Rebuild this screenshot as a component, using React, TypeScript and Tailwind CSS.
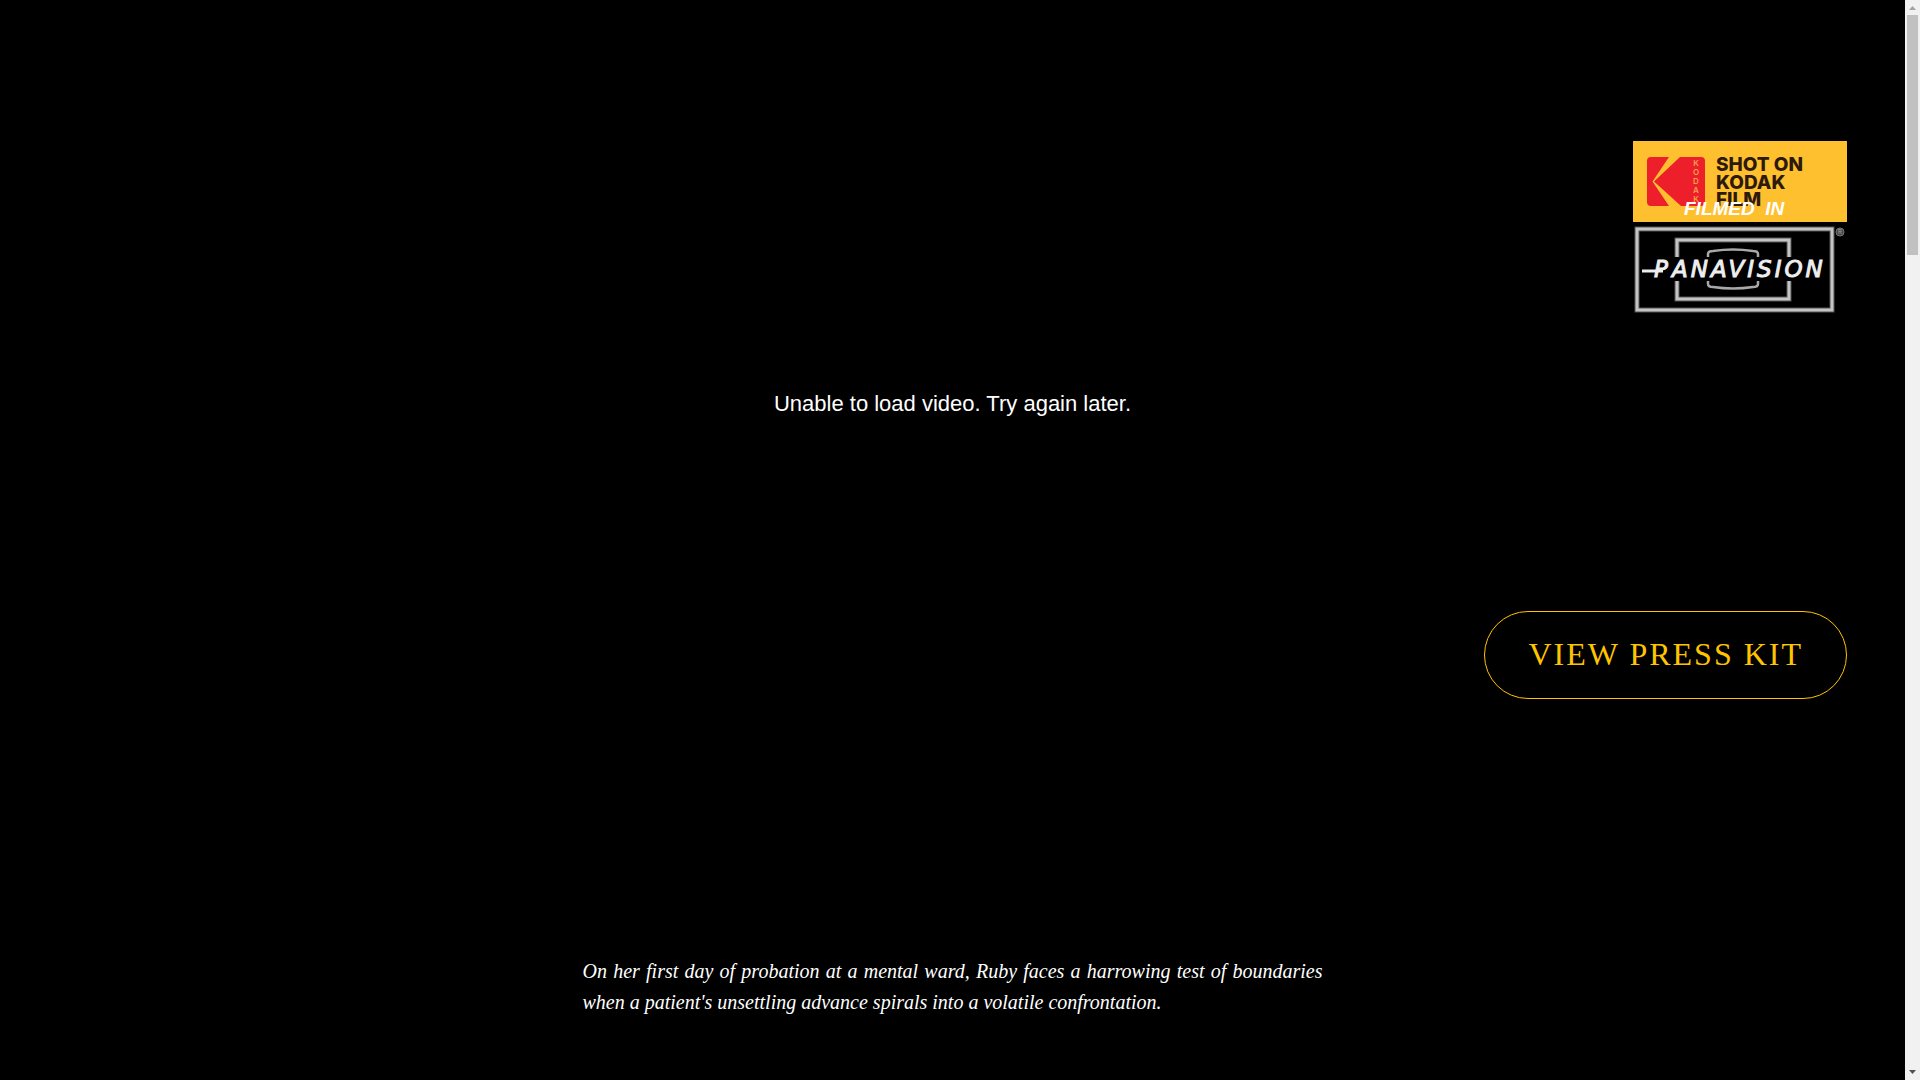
function KodakLogo() {
  return (
    <svg viewBox="0 0 214 81" className="w-[214px] h-[81px]" role="img" aria-label="Shot on Kodak Film">
      <rect width="214" height="81" fill="#ffc02f" />
      <path d="M18 16H36L19.500 40.500L36 65H18Q14 65 14 61V20Q14 16 18 16Z" fill="#ed1f2b" />
      <path d="M47 16H68Q72 16 72 20V61Q72 65 68 65H48L21 40.500Z" fill="#ed1f2b" />
      <g fill="#f8a04a" fontFamily="Inter, sans-serif" fontSize="8" fontWeight="600" textAnchor="middle">
        <text x="63" y="25">K</text>
        <text x="63" y="34">O</text>
        <text x="63" y="43">D</text>
        <text x="63" y="52">A</text>
        <text x="63" y="61">K</text>
      </g>
      <g fill="#2d1a0c" fontFamily="Inter, sans-serif" fontSize="19" fontWeight="800">
        <text x="83" y="30">SHOT ON</text>
        <text x="83" y="48">KODAK</text>
        <text x="83" y="65">FILM</text>
      </g>
    </svg>
  );
}

function PanavisionLogo() {
  return (
    <svg viewBox="0 0 214 118" className="w-[214px] h-[118px] -mt-[27px]" role="img" aria-label="Filmed in Panavision">
      <text
        x="51"
        y="20"
        fill="#fff"
        fontFamily="'Liberation Sans', Arial, sans-serif"
        fontSize="19"
        fontWeight="700"
        fontStyle="italic"
        xmlSpace="preserve"
      >
        {'FILMED  IN'}
      </text>

      {/* Frames, soft edge first */}
      <g fill="none" stroke="#555" strokeWidth="5">
        <rect x="4" y="34" width="195" height="81" />
        <path d="M44 62V45H156V62M44 86V104H156V86" />
      </g>
      <g fill="none" stroke="#c4c4c4" strokeWidth="3">
        <rect x="4" y="34" width="195" height="81" />
        <path d="M44 62V45H156V62M44 86V104H156V86" />
      </g>
      <g fill="none" stroke="#a8a8a8" strokeWidth="2.500">
        <path d="M75 62V59Q75 56 80 56Q100 53 120 56Q125 56 125 59V62" />
        <path d="M75 86V89Q75 92 80 92Q100 95 120 92Q125 92 125 89V86" />
      </g>

      {/* Wordmark */}
      <path d="M9 76H30" stroke="#eee" strokeWidth="3" />
      <text
        y="82"
        fill="#eee"
        stroke="#eee"
        strokeWidth="1"
        fontFamily="'DejaVu Sans', sans-serif"
        fontSize="23"
        fontStyle="italic"
        letterSpacing="3"
      >
        <tspan x="21">P</tspan>
        <tspan x="39">ANAVISION</tspan>
      </text>

      <circle cx="207" cy="37" r="4" fill="#444" stroke="#777" />
      <text x="207" y="39" fill="#aaa" fontFamily="Inter, sans-serif" fontSize="6" textAnchor="middle">
        R
      </text>
    </svg>
  );
}

function Scrollbar() {
  return (
    <div className="w-[15px] h-screen shrink-0 bg-[#f1f1f1] flex flex-col items-center" aria-hidden="true">
      <svg viewBox="0 0 15 15" className="w-[15px] h-[15px] shrink-0">
        <path d="M4 10H11L7.500 6Z" fill="#a3a3a3" />
      </svg>
      <div className="w-[11px] h-[240px] bg-[#c1c1c1]" />
      <svg viewBox="0 0 15 15" className="w-[15px] h-[15px] shrink-0 mt-auto">
        <path d="M4 5H11L7.500 9Z" fill="#505050" />
      </svg>
    </div>
  );
}

export default function App() {
  return (
    <div className="flex min-h-screen bg-black text-white">
      <main className="flex-1 min-w-0">
        <section className="grid grid-cols-[1fr_auto_1fr] h-[75vh] min-h-[700px]">
          <p className="col-start-2 self-center pb-[2px] font-['Liberation_Sans',Arial,sans-serif] text-[22px] leading-8">
            Unable to load video. Try again later.
          </p>

          <div className="flex flex-col items-end justify-between pt-[141px] pb-[111px] pr-[58px]">
            <div className="flex flex-col">
              <KodakLogo />
              <PanavisionLogo />
            </div>
            <a
              href="#press-kit"
              className="flex items-center h-[88px] px-[43px] pb-[2px] border border-[#ffc400] rounded-full text-[#ffc400] font-['Liberation_Serif',serif] text-[32px] tracking-[2px] whitespace-nowrap"
            >
              VIEW PRESS KIT
            </a>
          </div>
        </section>

        <section className="flex justify-center px-6 pt-[146px]">
          <p className="w-full max-w-[740px] font-['Liberation_Serif',serif] italic text-[20px] leading-[31px] text-justify">
            On her first day of probation at a mental ward, Ruby faces a harrowing test of boundaries
            when a patient's unsettling advance spirals into a volatile confrontation.
          </p>
        </section>
      </main>
      <Scrollbar />
    </div>
  );
}
